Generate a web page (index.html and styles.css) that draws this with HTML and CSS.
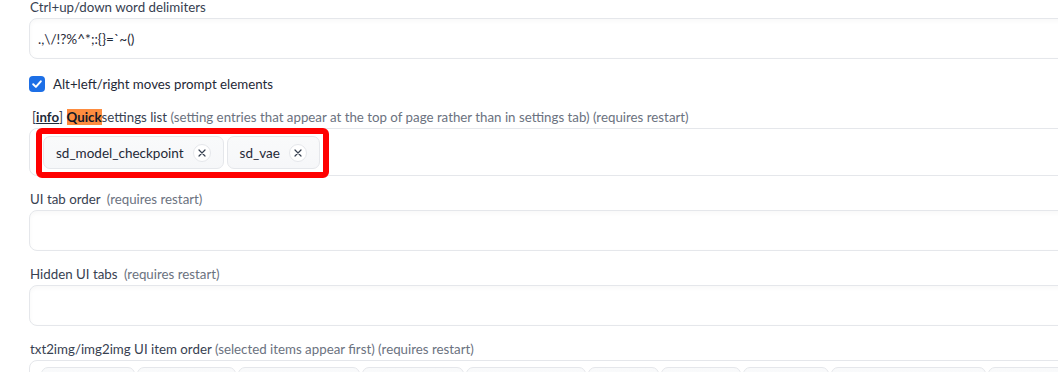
FILE: index.html
```html
<!DOCTYPE html>
<html>
	<head>
		<meta charset="UTF-8"/>
		<title>Settings</title>
		<link rel="stylesheet" href="styles.css">
	</head>
	<body>
		<div class="settings">
			<div class="field first">
				<div class="lbl">Ctrl+up/down word delimiters</div>
				<div class="textbox">.,\/!?%^*;:{}=`~()</div>
			</div>
			<label class="check">
				<span class="box">
					<svg width="16" height="16" viewBox="0 0 16 16"><path d="M4.2 8.3 L6.9 10.9 L11.8 5.3" fill="none" stroke="#fff" stroke-width="2" stroke-linecap="round" stroke-linejoin="round"/></svg>
				</span>
				Alt+left/right moves prompt elements
			</label>
			<div class="field after-check">
				<div class="lbl info">[<a href="#">info</a>] <span class="hl">Quick</span>settings list <span class="note">(setting entries that appear at the top of page rather than in settings tab) (requires restart)</span></div>
				<div class="dropdown">
					<div class="marked">
						<span class="token">sd_model_checkpoint<span class="x"><svg width="8" height="8" viewBox="0 0 8 8"><path d="M1 1 L7 7 M7 1 L1 7" stroke="#374151" stroke-width="1.2" stroke-linecap="round"/></svg></span></span>
						<span class="token">sd_vae<span class="x"><svg width="8" height="8" viewBox="0 0 8 8"><path d="M1 1 L7 7 M7 1 L1 7" stroke="#374151" stroke-width="1.2" stroke-linecap="round"/></svg></span></span>
					</div>
				</div>
			</div>
			<div class="field">
				<div class="lbl">UI tab order <span class="note spaced">(requires restart)</span></div>
				<div class="textbox"></div>
			</div>
			<div class="field">
				<div class="lbl">Hidden UI tabs <span class="note spaced">(requires restart)</span></div>
				<div class="textbox"></div>
			</div>
			<div class="field">
				<div class="lbl">txt2img/img2img UI item order <span class="note">(selected items appear first) (requires restart)</span></div>
				<div class="dropdown order">
					<span class="token">inpaint<span class="x"></span></span>
					<span class="token">sampler<span class="x"></span></span>
					<span class="token">checkboxes<span class="x"></span></span>
					<span class="token">hires_fix<span class="x"></span></span>
					<span class="token">dimensions<span class="x"></span></span>
					<span class="token">cfg<span class="x"></span></span>
					<span class="token">seed<span class="x"></span></span>
					<span class="token">batch<span class="x"></span></span>
					<span class="token">override_settings<span class="x"></span></span>
					<span class="token">scripts<span class="x"></span></span>
				</div>
			</div>
		</div>
	</body>
</html>
```
FILE: styles.css
```css
* {
	box-sizing: border-box;
}
html, body {
	margin: 0;
	padding: 0;
	background: #fff;
	overflow: hidden;
}
body {
	font: 13.3px Lato, "Source Sans Pro", sans-serif;
	color: #374151;
	padding-left: 29px;
}
.settings {
	width: 1100px;
	margin-top: -2px;
}
.field {
	margin-top: 14px;
}
.field.first {
	margin-top: 0;
}
.field.after-check {
	margin-top: 0;
}
.lbl {
	line-height: 18px;
	margin-bottom: 2px;
	padding-left: 1px;
	white-space: nowrap;
}
.note {
	color: #6b7280;
}
.note.spaced {
	margin-left: 3px;
}
.lbl.info {
	padding-left: 3px;
}
.lbl.info a {
	color: #1f2937;
	font-weight: bold;
	text-decoration: underline;
}
.hl {
	background: #fd8c3f;
	color: #111827;
	font-weight: bold;
}
.textbox {
	height: 41px;
	border: 1px solid #e5e7eb;
	border-radius: 8px;
	box-shadow: inset 0 2px 4px rgba(0, 0, 0, 0.03);
	padding: 10px 8px 0;
	line-height: 20px;
	color: #1f2937;
	font-size: 13.6px;
}
.check {
	display: flex;
	align-items: center;
	gap: 8px;
	margin: 17px 0 16px;
	height: 16px;
	color: #1f2937;
}
.check .box {
	width: 16px;
	height: 16px;
	border-radius: 4px;
	background: #1d6fe6;
	display: flex;
}
.dropdown {
	height: 48px;
	border: 1px solid #e5e7eb;
	border-radius: 8px;
	padding: 0 6px;
	display: flex;
	align-items: flex-start;
}
.marked {
	display: flex;
	gap: 3px;
	margin: -1px 0 -3px;
	padding: 2px 3px 3px 1px;
	border: 6px solid #ff0000;
	border-radius: 6px;
}
.token {
	display: inline-flex;
	align-items: center;
	height: 33px;
	padding: 0 12px;
	border: 1px solid #e5e7eb;
	border-radius: 7px;
	background: linear-gradient(#f9fafb, #f6f7f9);
	color: #1f2937;
	white-space: nowrap;
	font-size: 13.5px;
}
.token .x {
	width: 18px;
	height: 18px;
	margin-left: 9px;
	border: 1px solid #e5e7eb;
	border-radius: 50%;
	background: #fff;
	display: flex;
	align-items: center;
	justify-content: center;
}
.dropdown.order {
	height: 60px;
	padding: 6px 11px;
	gap: 2px;
	overflow: hidden;
}
```
